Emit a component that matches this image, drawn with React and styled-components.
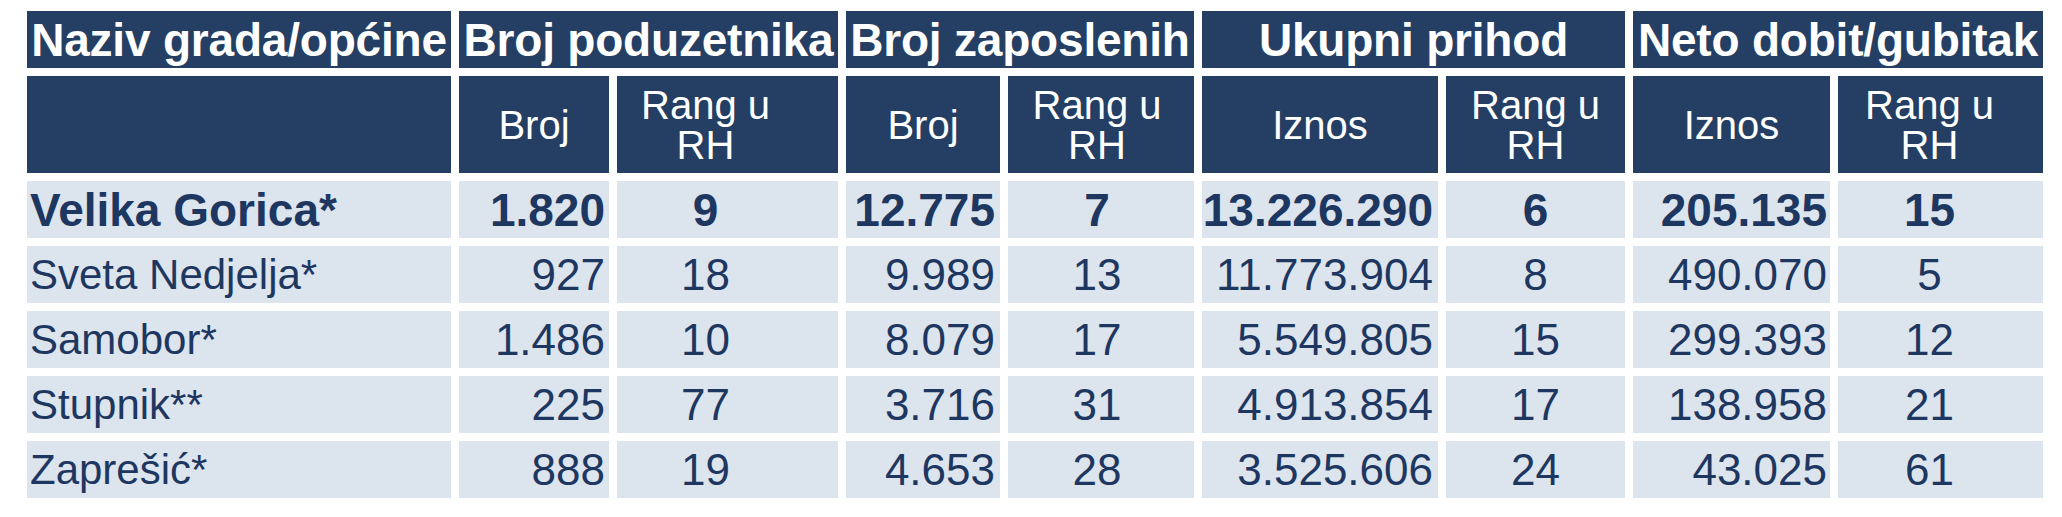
import React from "react";
import styled, { createGlobalStyle } from "styled-components";

const GlobalStyle = createGlobalStyle`
  html, body {
    margin: 0;
    padding: 0;
    background: #ffffff;
  }
  body {
    font-family: "Liberation Sans", Arial, sans-serif;
  }
`;

const Page = styled.div`
  padding: 11px 0 0 27px;
  width: 2062px;
  height: 517px;
  box-sizing: border-box;
  background: #ffffff;
`;

const Table = styled.div`
  display: grid;
  grid-template-columns: 424px 150px 221px 154px 186px 236px 179px 197px 205px;
  grid-template-rows: 57px 97px repeat(5, 57px);
  gap: 8px;
  font-family: "Liberation Sans", Arial, sans-serif;
`;

const GroupHeader = styled.div`
  grid-column: span ${(p) => p.$span};
  background: #243f63;
  color: #ffffff;
  font-weight: 700;
  font-size: 46px;
  line-height: 1;
  display: flex;
  align-items: center;
  justify-content: center;
  white-space: nowrap;
  overflow: visible;
  letter-spacing: -0.2px;
`;

const SubHeader = styled.div`
  background: #243f63;
  color: #ffffff;
  font-size: 40px;
  line-height: 40px;
  display: flex;
  flex-direction: column;
  align-items: center;
  justify-content: center;
  text-align: center;
  padding-right: ${(p) => p.$pr || 0}px;
  white-space: nowrap;
`;

const Cell = styled.div`
  background: #dce4ee;
  color: #1e3761;
  font-size: ${(p) => (p.$bold ? 46 : p.$name ? 42 : 44)}px;
  font-weight: ${(p) => (p.$bold ? 700 : 400)};
  line-height: 1;
  display: flex;
  align-items: center;
  justify-content: ${(p) =>
    p.$align === "left" ? "flex-start" : p.$align === "right" ? "flex-end" : "center"};
  padding-left: ${(p) => p.$pl || 0}px;
  padding-right: ${(p) => p.$pr || 0}px;
  white-space: nowrap;
  box-sizing: border-box;
`;

const groups = [
  { label: "Naziv grada/općine", span: 1 },
  { label: "Broj poduzetnika", span: 2 },
  { label: "Broj zaposlenih", span: 2 },
  { label: "Ukupni prihod", span: 2 },
  { label: "Neto dobit/gubitak", span: 2 },
];

const columns = [
  { sub: [], align: "left", pl: 3 },
  { sub: ["Broj"], align: "right", pr: 4, subPr: 0 },
  { sub: ["Rang u", "RH"], align: "center", pr: 44, subPr: 44 },
  { sub: ["Broj"], align: "right", pr: 5, subPr: 0 },
  { sub: ["Rang u", "RH"], align: "center", pr: 8, subPr: 8 },
  { sub: ["Iznos"], align: "right", pr: 5, subPr: 0 },
  { sub: ["Rang u", "RH"], align: "center", pr: 0, subPr: 0 },
  { sub: ["Iznos"], align: "right", pr: 3, subPr: 0 },
  { sub: ["Rang u", "RH"], align: "center", pr: 22, subPr: 22 },
];

const rows = [
  { bold: true, values: ["Velika Gorica*", "1.820", "9", "12.775", "7", "13.226.290", "6", "205.135", "15"] },
  { values: ["Sveta Nedjelja*", "927", "18", "9.989", "13", "11.773.904", "8", "490.070", "5"] },
  { values: ["Samobor*", "1.486", "10", "8.079", "17", "5.549.805", "15", "299.393", "12"] },
  { values: ["Stupnik**", "225", "77", "3.716", "31", "4.913.854", "17", "138.958", "21"] },
  { values: ["Zaprešić*", "888", "19", "4.653", "28", "3.525.606", "24", "43.025", "61"] },
];

export default function App() {
  return (
    <>
      <GlobalStyle />
      <Page>
        <Table>
          {groups.map((g) => (
            <GroupHeader key={g.label} $span={g.span}>
              {g.label}
            </GroupHeader>
          ))}
          {columns.map((c, i) => (
            <SubHeader key={"s" + i} $pr={c.subPr}>
              {c.sub.map((line) => (
                <span key={line}>{line}</span>
              ))}
            </SubHeader>
          ))}
          {rows.map((r, ri) =>
            r.values.map((v, ci) => (
              <Cell
                key={ri + "-" + ci}
                $bold={r.bold}
                $name={ci === 0}
                $align={columns[ci].align}
                $pl={columns[ci].pl}
                $pr={columns[ci].pr}
              >
                {v}
              </Cell>
            ))
          )}
        </Table>
      </Page>
    </>
  );
}
